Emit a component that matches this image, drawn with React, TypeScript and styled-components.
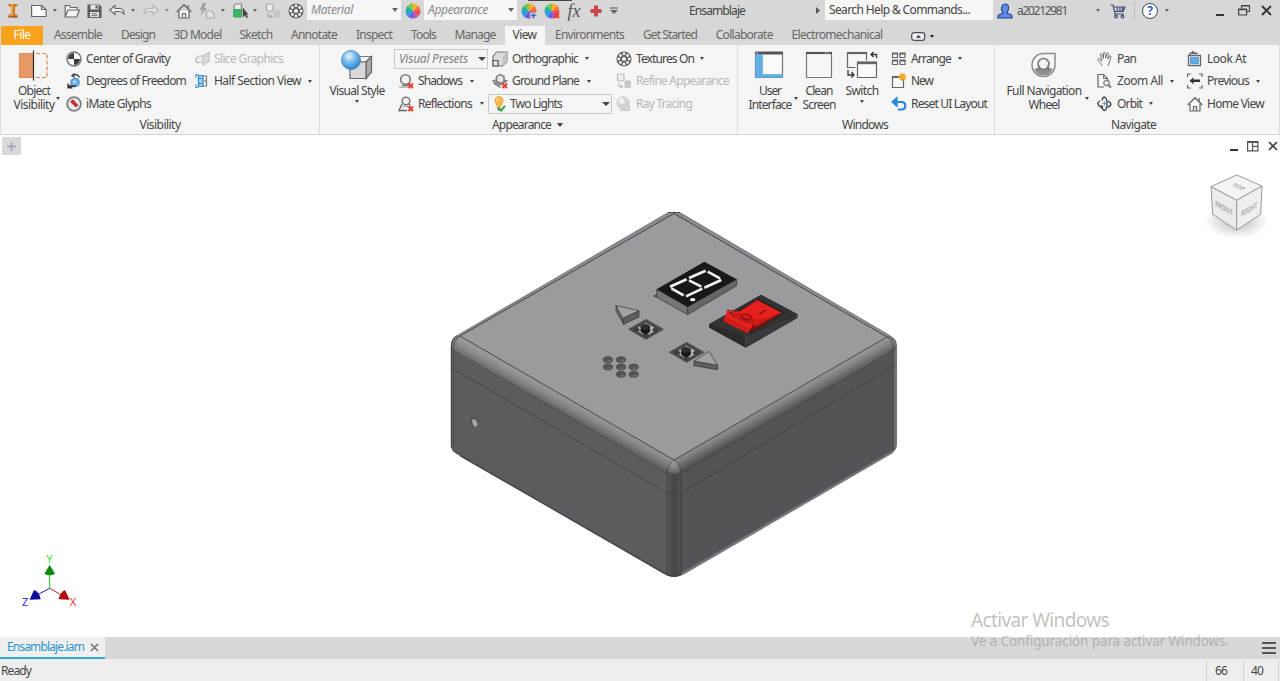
import React, { useLayoutEffect, useRef, useState } from "react";
import styled, { createGlobalStyle, css } from "styled-components";

const Global = createGlobalStyle`
  html, body { margin: 0; padding: 0; background: #fff; }
  body { font-family: "Noto Sans", "Open Sans", sans-serif; font-size: 12px; color: #444; overflow: hidden; }
  * { box-sizing: border-box; }
  svg { display: block; flex: none; overflow: visible; }
`;

/* ---------- text ---------- */

const TextSpan = styled.span<{ $italic?: boolean; $size?: number; $color?: string }>`
  display: inline-block;
  white-space: nowrap;
  line-height: 14px;
  flex: none;
  ${(p) => p.$italic && css`font-style: italic;`}
  ${(p) => p.$size && css`font-size: ${p.$size}px; line-height: ${p.$size * 1.3}px;`}
  ${(p) => p.$color && css`color: ${p.$color};`}
`;

type TextProps = { children: string; w: number; italic?: boolean; size?: number; color?: string };

/* Tracks the letters so that a caption takes exactly w pixels. */
function Text({ children, w, italic, size, color }: TextProps) {
  const ref = useRef<HTMLSpanElement>(null);
  const [spacing, setSpacing] = useState(0);
  useLayoutEffect(() => {
    const el = ref.current;
    if (!el) return;
    el.style.letterSpacing = "0px";
    const natural = el.getBoundingClientRect().width;
    const next = (w - natural) / children.length;
    el.style.letterSpacing = `${next}px`;
    setSpacing(next);
  }, [children, w]);
  return (
    <TextSpan ref={ref} $italic={italic} $size={size} $color={color} style={{ letterSpacing: spacing }}>
      {children}
    </TextSpan>
  );
}

const Caret = styled.i<{ $w?: number; $ml?: number; $color?: string }>`
  flex: none;
  width: 0;
  height: 0;
  margin-left: ${(p) => p.$ml ?? 0}px;
  border-left: ${(p) => (p.$w ?? 5) / 2}px solid transparent;
  border-right: ${(p) => (p.$w ?? 5) / 2}px solid transparent;
  border-top: ${(p) => ((p.$w ?? 5) + 1) / 2}px solid ${(p) => p.$color ?? "#444"};
`;

/* ---------- layout ---------- */

const Window = styled.div`
  width: 1280px;
  height: 681px;
  display: flex;
  flex-direction: column;
  background: #fff;
  position: relative;
`;

const TitleBar = styled.header`
  height: 26px;
  flex: none;
  background: #d7d7d7;
  display: flex;
  align-items: flex-start;
`;

const TopEdge = styled.div`
  position: absolute;
  left: 528px;
  top: 0;
  width: 44px;
  height: 1px;
  background: #4a4545;
`;

const Slot = styled.div<{ $ml?: number; $w: number }>`
  flex: none;
  height: 21px;
  width: ${(p) => p.$w}px;
  margin-left: ${(p) => p.$ml ?? 0}px;
  display: flex;
  align-items: center;
  justify-content: center;
`;

const TitleField = styled(Slot)`
  height: 20px;
  background: #f6f6f6;
  justify-content: flex-start;
  padding-left: 4px;
`;

const FieldCaret = styled.span`
  margin-left: auto;
  padding-right: 3px;
`;

const VRule = styled.div<{ $ml: number }>`
  width: 1px;
  height: 17px;
  margin: 2px 0 0 ${(p) => p.$ml}px;
  background: #bcbcbc;
`;

const TabStrip = styled.nav`
  height: 19px;
  flex: none;
  background: #d7d7d7;
  display: flex;
  padding-left: 1px;
  color: #666;
`;

const Tab = styled.div<{ $w: number; $kind?: "file" | "active" }>`
  flex: none;
  width: ${(p) => p.$w}px;
  height: 19px;
  padding-bottom: 1px;
  display: flex;
  justify-content: center;
  align-items: center;
  ${(p) => p.$kind === "file" && css`background: #fba21c; color: #fff; margin-right: 1.5px;`}
  ${(p) => p.$kind === "active" && css`background: #f5f5f5; color: #444;`}
`;

const Ribbon = styled.section`
  height: 90px;
  flex: none;
  background: #f5f5f5;
  border-bottom: 1px solid #d4d4d4;
  border-left: 1px solid #dcdcdc;
  display: flex;
`;

const Group = styled.div<{ $w: number }>`
  width: ${(p) => p.$w}px;
  flex: none;
  display: flex;
  flex-direction: column;
  border-right: 1px solid #dcdcdc;
`;

const GroupBody = styled.div`
  height: 71px;
  padding-top: 2.5px;
  display: flex;
`;

const GroupTitle = styled.div<{ $shift?: number }>`
  height: 17px;
  padding-right: ${(p) => p.$shift ?? 0}px;
  display: flex;
  align-items: center;
  justify-content: center;
`;

const Column = styled.div<{ $w: number; $pl?: number }>`
  width: ${(p) => p.$w}px;
  padding-left: ${(p) => p.$pl ?? 0}px;
  flex: none;
  display: flex;
  flex-direction: column;
`;

const Row = styled.div<{ $disabled?: boolean }>`
  height: 22.5px;
  display: flex;
  align-items: center;
  ${(p) => p.$disabled && css`color: #b8b8b8;`}
`;

const IconBox = styled.span<{ $gap?: number }>`
  width: 16px;
  height: 16px;
  flex: none;
  margin-right: ${(p) => p.$gap ?? 4}px;
`;

const Combo = styled.div<{ $w: number }>`
  width: ${(p) => p.$w}px;
  height: 20px;
  margin: 1px 0 1.5px -4px;
  padding: 0 1px 0 4px;
  border: 1px solid #c9c9c9;
  display: flex;
  align-items: center;
  justify-content: space-between;
`;

const ComboLead = styled.span`
  display: flex;
  align-items: center;
`;

const BigButton = styled.div<{ $w: number; $ml: number }>`
  width: ${(p) => p.$w}px;
  margin-left: ${(p) => p.$ml}px;
  flex: none;
  display: flex;
  flex-direction: column;
  align-items: center;
  padding-top: 2px;
`;

const BigIcon = styled.div`
  height: 34px;
  width: 32px;
`;

const BigCaret = styled.div`
  height: 68px;
  width: 6px;
  flex: none;
  padding-top: 49px;
`;

const UnderCaret = styled.div`
  padding-top: 2px;
`;

function Command(p: { icon: React.ReactNode; label: string; w: number; caret?: number; disabled?: boolean; gap?: number }) {
  return (
    <Row $disabled={p.disabled}>
      <IconBox $gap={p.gap}>{p.icon}</IconBox>
      <Text w={p.w}>{p.label}</Text>
      {p.caret !== undefined && <Caret $ml={p.caret} />}
    </Row>
  );
}

/* ---------- icons ---------- */

const S = ({ children, w = 16, h = 16, vb }: { children: React.ReactNode; w?: number; h?: number; vb?: string }) => (
  <svg width={w} height={h} viewBox={vb ?? `0 0 ${w} ${h}`} fill="none" stroke="#666" strokeWidth="1.2">
    {children}
  </svg>
);

const RedX = () => <path d="M10.500 10.500l4.500 4.500M15 10.500L10.500 15" stroke="#ee3a30" strokeWidth="2.100" />;

const InventorLogo = () => (
  <S w={10} h={15}>
    <path d="M.5 1h9v2l-2.400 1v7l2.400 1v2h-9v-2L3 11V4L.5 3z" fill="#cf7c22" stroke="none" />
    <path d="M3 1h2v13H3z" fill="#eaa04b" stroke="none" />
    <path d="M.5 14h9" stroke="#8c4b13" />
  </S>
);
const NewDoc = () => <S><path d="M.6 2.500h10l4.500 4V13.500H.6z" fill="#fafafa" /><path d="M10.500 2.500v4h4.500" /></S>;
const OpenFolder = () => <S><path d="M1.200 14V2.500h4l1.500 2h6.500v2.500M1.200 14L4 7h11.300l-2.500 7z" fill="#f4f4f4" /></S>;
const Save = () => (
  <S>
    <path d="M2 2h11.200l1.800 1.800V14.500H2z" fill="#5a5a5a" />
    <path d="M4.500 2h8v4.500h-8zM4 9h9v5h-9z" fill="#e6e6e6" stroke="none" />
    <path d="M5.500 10.800h6M5.500 12.600h6" strokeWidth=".9" /><path d="M9.500 2.500h2v3h-2z" fill="#555" stroke="none" />
  </S>
);
const Undo = () => (
  <S><path d="M.8 7L6 2.500v3h4.500c3 0 4.500 2 4.500 5.500C13.500 9.100 12 8.500 10 8.500H6v3z" strokeWidth="1.100" fill="#eee" /></S>
);
const Redo = () => (
  <S><path d="M15.200 7L10 2.500v3H5.500c-3 0-4.500 2-4.500 5.500C2.500 9.100 4 8.500 6 8.500h4v3z" stroke="#b4b4b4" strokeWidth="1.100" fill="#e2e2e2" /></S>
);
const Home = () => (
  <S>
    <path d="M3 8v7h10V8" fill="#f7f7f7" /><path d="M.8 9L8 1.800 15.200 9" strokeWidth="1.500" />
    <path d="M12.200 2v3.500" /><path d="M6.500 15v-4.500h3V15" />
  </S>
);
const Flash = () => (
  <S>
    <path d="M4 0L.5 7h3L1 13 8 5H5l2.500-5z" fill="#a0a0a0" stroke="none" />
    <path d="M7.500 8h5l2.500 2.500V15H7.500z" fill="#e2e2e2" stroke="#aaa" />
  </S>
);
const SelectTool = () => (
  <S>
    <path d="M1 6L1 2.500 3 1h5.500v5" fill="#ececec" stroke="#888" /><path d="M8.500 1v12" stroke="#888" /><path d="M.8 6.500h7.400V14H.8z" fill="#38b866" stroke="#40a562" />
    <path d="M10 5v9l2-2 1.500 3 1-.5-1.300-3H15z" fill="#444" stroke="#444" strokeWidth=".5" />
  </S>
);
const CopyBodies = ({ c = "#aaa" }: { c?: string }) => (
  <S>
    <path d="M1.500 2.500q0-1.500 1.500-1.500h3.500q1.500 0 1.500 1.500v4q0 1.500-1.500 1.500H3q-1.500 0-1.500-1.500z" fill="#eee" stroke={c} />
    <path d="M3 10v3.500h3.500M5 12l1.500 1.500L5 15" stroke={c} />
    <path d="M9 8h5.500v6.500H9z" fill="#c8c8c8" stroke="#c0c0c0" strokeWidth=".8" />
  </S>
);
const TextureBall = () => (
  <S>
    <circle cx="8" cy="8" r="7" fill="#606060" />
    <g fill="#f4f4f4" stroke="none">
      <rect x="6.200" y="6.200" width="3.600" height="3.600" transform="rotate(45 8 8)" />
      <circle cx="8" cy="2.800" r="1.400" /><circle cx="8" cy="13.200" r="1.400" /><circle cx="2.800" cy="8" r="1.400" /><circle cx="13.200" cy="8" r="1.400" />
      <circle cx="4.500" cy="4.500" r="1.400" /><circle cx="11.500" cy="4.500" r="1.400" /><circle cx="4.500" cy="11.500" r="1.400" /><circle cx="11.500" cy="11.500" r="1.400" />
    </g>
  </S>
);
const wheelColors = ["#ffb02e", "#f4743b", "#ee4a55", "#b155c9", "#5869e0", "#2e9be8", "#25b88a", "#7cc64a"];
const ColorWheel = ({ badge }: { badge?: "plus" | "x" }) => {
  const pt = (a: number) => `${8 + 7.5 * Math.sin(a)} ${8 - 7.5 * Math.cos(a)}`;
  return (
    <S>
      {wheelColors.map((c, i) => (
        <path key={c} stroke="none" fill={c} d={`M8 8L${pt((i * Math.PI) / 4)}A7.500 7.500 0 0 1 ${pt(((i + 1) * Math.PI) / 4)}z`} />
      ))}
      {badge === "plus" && <path d="M12.500 9v7M9 12.500h7" stroke="#e8f1fa" strokeWidth="3.600" />}
      {badge === "plus" && <path d="M12.500 9.500v6M9.500 12.500h6" stroke="#2f6da8" strokeWidth="1.600" />}
      {badge === "x" && <RedX />}
    </S>
  );
};
const Fx = styled.span`
  font: italic 18px/18px "Liberation Serif", serif;
  color: #555;
  letter-spacing: 0;
`;
const Plus = () => <S w={12} h={12}><path d="M6 .5v11M.5 6h11" stroke="#c9494a" strokeWidth="4" /></S>;
const Person = () => (
  <S>
    <path d="M8 1c2.400 0 3.600 1.700 3.600 4S10 9 10 10c0 .8 5 1 5 3v2H1v-2c0-2 5-2.200 5-3 0-1-1.600-1.700-1.600-4S5.600 1 8 1z" fill="#5d8bea" stroke="#26407c" strokeWidth="1.100" />
  </S>
);
const Cart = () => (
  <S>
    <path d="M.5 2H3l2 9h9M3.500 4h11.500l-2 4.500H4.800M7 4.500l.8 4M10 4.500v4M13 4.500l-1 4" stroke="#3d4c73" strokeWidth="1.200" />
    <circle cx="6" cy="13.500" r="1.300" stroke="#3d4c73" /><circle cx="12.500" cy="13.500" r="1.300" stroke="#3d4c73" />
  </S>
);
const HelpCircle = styled.span`
  width: 16px;
  height: 16px;
  flex: none;
  border: 1.5px solid #3b4658;
  border-radius: 50%;
  background: #fff;
  color: #2d62c4;
  font: bold 12px/14px "Noto Sans", sans-serif;
  text-align: center;
`;
const MinIcon = () => <S w={8} h={12}><path d="M0 10h8" stroke="#333" strokeWidth="2" /></S>;
const RestoreIcon = () => <S w={12} h={11}><path d="M3.500 3.500v-3h8v6H9M3 1h8.500" stroke="#444" /><path d="M.6 4h8v6h-8zM.6 4.600h8" stroke="#444" /></S>;
const CloseIcon = ({ s = 11, c = "#333", t = 1.8 }: { s?: number; c?: string; t?: number }) => (
  <S w={s} h={s}><path d={`M1 1L${s - 1} ${s - 1}M${s - 1} 1L1 ${s - 1}`} stroke={c} strokeWidth={t} /></S>
);

const ObjectVisibility = () => (
  <S w={32} h={34}>
    <path d="M1.500 3.500h13v24h-13z" fill="#e59a66" stroke="#df8f5b" />
    <path d="M18 3.500h11v24H18" stroke="#dc8250" strokeDasharray="4 2" />
    <path d="M15.500 0.500v30" stroke="#333" />
  </S>
);
const Gravity = () => (
  <S>
    <circle cx="8" cy="8" r="7" fill="#fafafa" stroke="#777" strokeWidth="1.500" />
    <path d="M8 8V2A6 6 0 0 0 2 8zM8 8v6a6 6 0 0 0 6-6z" fill="#3c3c3c" stroke="none" />
  </S>
);
const Freedom = () => (
  <S>
    <circle cx="9" cy="9.500" r="4.200" fill="#6fb0e4" stroke="#5292c8" /><circle cx="8.500" cy="9" r="1.400" fill="#b7dbf7" stroke="none" />
    <path d="M6.500 2.500C9 .8 12 1.500 13.500 4.500M8.500 .5L6 2.800l3 1.200" stroke="#333" strokeWidth="1.300" /><path d="M3 12.500c2 1.500 5 1.500 6.500 0M2 11.500v3.500h3.500z" stroke="#333" fill="#333" strokeWidth="1.200" />
  </S>
);
const IMate = () => (
  <S>
    <circle cx="8" cy="8" r="6.900" fill="#e8e8e8" stroke="#858585" strokeWidth="1.900" />
    <path d="M5.500 4.500l5.500 6" stroke="#c43038" strokeWidth="4" /><path d="M4.200 7l6 5" stroke="#fff" strokeWidth=".7" />
  </S>
);
const Slice = () => (
  <S><path d="M1 11.500V7.500l3-2.500h4v6M1 11.500h6M8 5l6-3.500V10l-6 4z" fill="#ececec" stroke="#bbb" /><path d="M10 6l2-1.500v5L10 11z" fill="#f4f4f4" stroke="#bbb" strokeWidth=".8" /></S>
);
const HalfSection = () => (
  <S>
    <path d="M1 4.500V1.500h2M1 11.500v3h2" stroke="#2f8ddb" /><path d="M3.500 2.500h4.500v11H3.500z" fill="#a5d3f7" stroke="#2f8ddb" /><path d="M3.500 5.500H8M3.500 10.500H8" stroke="#2f8ddb" />
    <path d="M8.500 3h3v10h-3M8.500 8h3" stroke="#777" />
  </S>
);
const VisualStyleIcon = () => (
  <S w={32} h={34}>
    <defs>
      <radialGradient id="ball" cx=".4" cy=".3" r=".7"><stop offset="0" stopColor="#eaf6ff" /><stop offset=".45" stopColor="#7dbcec" /><stop offset="1" stopColor="#2d86cb" /></radialGradient>
    </defs>
    <path d="M9 12l5-5.500h16.500L25 12z" fill="#f6f6f6" stroke="#777" /><path d="M25 12l5.500-5.500V22L25 28.500z" fill="#a9a9a9" stroke="#666" />
    <path d="M9 12h16v16.500H9z" fill="#d9d9d9" stroke="#666" />
    <circle cx="10" cy="10" r="9.500" fill="url(#ball)" stroke="#3a86c2" strokeWidth=".8" />
  </S>
);
const Shadows = () => <S><circle cx="7.500" cy="6.500" r="4.800" fill="#f2f2f2" stroke="#777" strokeWidth="1.600" /><path d="M4 12.500h7" stroke="#777" strokeWidth="1.300" /><path d="M1 14.200h9" stroke="#aaa" strokeWidth="1.300" /><RedX /></S>;
const Reflections = () => <S><path d="M4 8L1 14.500h8M11 8l1.500 2.500" stroke="#666" strokeWidth="1.400" /><circle cx="8" cy="5" r="3.800" fill="#f2f2f2" stroke="#777" strokeWidth="1.500" /><path d="M5 11.500c1-2 4-2 5.500 0" stroke="#888" /><RedX /></S>;
const Ortho = () => (
  <S><path d="M1 5.500L4.500 1H15v9.500L10.500 15H1z" fill="#dcdcdc" stroke="#777" /><path d="M10.500 5.500L15 1v9.500L10.500 15z" fill="#c4c4c4" stroke="none" /><path d="M1 9.500h5V15H1z" fill="#e8e8e8" stroke="#555" /></S>
);
const Ground = () => (
  <S><path d="M1 8l6-2.500 8 2.500-7 4z" fill="#ddd" stroke="#777" /><path d="M4.500 3.500l3.500-2 4 2v5l-3.500 2-4-2z" fill="#e6e6e6" stroke="#777" strokeWidth="1.400" /><path d="M1.500 10l7 4.500" /><RedX /></S>
);
const Bulb = () => (
  <S>
    <path d="M6 .5a4.200 4.200 0 0 1 4.200 4.200C10.200 7 8.500 7.500 8 10.500H4C3.500 7.500 1.800 7 1.800 4.700A4.200 4.200 0 0 1 6 .5z" fill="#fbb649" stroke="#e59a2e" strokeWidth=".6" />
    <path d="M4.500 2.500c-1 1-.8 2 0 3" stroke="#fff1cc" /><path d="M4 12h3M4.500 14h2" stroke="#777" strokeWidth="1.500" />
    <path d="M5.500 12l2.500 2.500 4-4.500" stroke="#2fa343" strokeWidth="1.900" />
  </S>
);
const RayBall = () => <S><path d="M4 14h9v-4" stroke="#ccc" strokeWidth="2" /><circle cx="7" cy="7" r="6.200" fill="#d2d2d2" stroke="#cacaca" strokeWidth=".8" /><circle cx="5.500" cy="5" r="3" fill="#f0f0f0" stroke="none" /></S>;
const UserInterface = () => (
  <S w={32} h={34}>
    <path d="M1.500 2.500h27v25h-27z" fill="#fafafa" stroke="#777" /><path d="M1 3h28" stroke="#555" strokeWidth="3" />
    <path d="M1.500 4.500h7v20h20v3h-27z" fill="#62ade3" stroke="#5aa3d8" strokeWidth=".6" /><path d="M2.500 3h1.500" stroke="#fff" />
  </S>
);
const CleanScreen = () => <S w={32} h={34}><path d="M3.500 2.500h25v25h-25z" fill="#f6f6f6" stroke="#777" /><path d="M3 3h26" stroke="#555" strokeWidth="2.200" /><path d="M22 3h1M24.500 3h1" stroke="#fff" /></S>;
const SwitchIcon = () => (
  <S w={32} h={34}>
    <path d="M9.500 17.500h-8v-15h19v8" fill="#f6f6f6" /><path d="M1 3h20" strokeWidth="2.200" />
    <path d="M11.500 12h19v15.500h-19z" fill="#fafafa" /><path d="M11 13h20" strokeWidth="2.400" />
    <path d="M30.500 8V4.500H25M27.500 2L25 4.500 27.500 7M2 20v5h6M5.500 22L8 25l-2.500 2.500" stroke="#333" strokeWidth="1.300" />
  </S>
);
const Arrange = () => <S><path d="M1.500 2.500h5v4h-5zM9 2.500h5v4H9zM1.500 9.500h5v4h-5zM9 9.500h5v4H9z" fill="#fafafa" /><path d="M1 2.500h6M8.500 2.500h6M1 9.500h6M8.500 9.500h6" strokeWidth="1.900" /></S>;
const NewWindow = () => <S><path d="M1.500 3.500h11v11h-11z" fill="#f8f8f8" /><path d="M1 4h12" strokeWidth="2" /><path d="M11.500 0v8M7.500 4h8M8.800 1.200l5.500 5.500M14.300 1.200L8.800 6.700" stroke="#f9a826" strokeWidth="1.700" /></S>;
const ResetIcon = () => <S><path d="M4 6h6.500c5 0 5 7.500 0 7.500H7" stroke="#2a86d8" strokeWidth="2.200" /><path d="M6 1.500L1 6l5 4.500z" fill="#2a86d8" stroke="#2a86d8" /></S>;
const NavWheel = () => (
  <S w={32} h={34}>
    <path d="M15.500 3.500H27V15A11.500 11.500 0 1 1 15.500 3.500z" fill="#f6f6f6" stroke="#8c8c8c" strokeWidth="1.500" />
    <path d="M7 19.500A9.500 9.500 0 0 0 24 19.500L20 17.500H11z" fill="#8e8e8e" stroke="#8e8e8e" />
    <circle cx="15.500" cy="14" r="5.500" fill="#f3f3f3" stroke="#777" strokeWidth="1.500" />
    <path d="M10.500 20.500v-2q0-2.500 1.500-3.500M20.500 20.500v-2q0-2.500-1.500-3.500" stroke="#777" strokeWidth=".8" />
  </S>
);
const PanHand = () => (
  <S><path d="M5 15l-1-2.500L.8 8.500c-.3-1 .8-1.400 1.500-.7L5 10 3.300 3.500c0-1 1.200-1.200 1.600-.2L6.500 7.500 6.500 2c.2-1 1.500-1 1.600 0l.6 5.200L10 2.200c.4-1 1.600-.6 1.500.3L10.800 8l1.700-3c.6-.8 1.700-.2 1.400.7L12.500 11 11 15" fill="#f8f8f8" stroke="#777" strokeWidth="1" /></S>
);
const ZoomAllIcon = () => <S><path d="M7 14H1V1.500h5.500l4 4V7" fill="#f6f6f6" /><path d="M6.500 1.500v4h4" strokeWidth=".9" /><circle cx="9.500" cy="10" r="2.700" stroke="#777" /><path d="M11.500 12l2.500 2.500" strokeWidth="1.900" stroke="#777" /></S>;
const OrbitIcon = () => (
  <S>
    <path d="M5 4.500C5.500 2 6.300 1 7.300 1c3.700 0 3.500 13.500 0 13.500-1.200 0-2-1.500-2.300-3.500" stroke="#444" strokeWidth="1.300" />
    <path d="M3 5C-1 7 1 10.500 5 11M10.500 5c4.500 1.500 4.500 5 0 6" stroke="#444" strokeWidth="1.300" />
    <path d="M4.500 8.500L6.500 11l-3 2z" fill="#444" stroke="none" /><path d="M7.500 5.500v4M5.500 7.500h4" stroke="#4a9ade" strokeWidth="1.200" />
  </S>
);
const LookAt = () => <S><path d="M1.500 4.500h12v10h-12z" fill="#f8f8f8" stroke="#666" strokeWidth="1.300" /><path d="M3.500 6.500h8v6h-8z" fill="#63ade5" stroke="#3e8fce" strokeWidth=".8" /><path d="M2 3.500L6 .8v1.500h4.500" stroke="#555" strokeWidth="1.500" /></S>;
const PreviousIcon = () => <S><path d="M4 1H.6v3M12 1h3v3M4 15H.6v-3M12 15h3v-3" /><path d="M2.500 7.700l4-3.500V6.500H13v2.400H6.500v2.300z" fill="#333" stroke="none" /></S>;
const RibbonToggle = () => <S w={15} h={9}><rect x=".7" y=".7" width="13" height="7.600" rx="2.500" fill="#f1f1f1" stroke="#444f5f" /><path d="M5 5.700h5L7.500 3z" fill="#333" stroke="none" /></S>;
const MdiTile = () => <S w={12} h={11}><path d="M.6 .6h10.300v9.300H.6zM.6 1.500h10.300M5.500 1.500v8M5.500 5.300H11" stroke="#555" /></S>;

/* ---------- canvas ---------- */

const Canvas = styled.main`
  position: relative;
  height: 502px;
  flex: none;
  background: #fff;
`;
const CanvasHead = styled.div`
  display: flex;
  align-items: flex-start;
  height: 22px;
  padding: 2px 0 0 2px;
`;
const AddTab = styled.div`
  width: 19px;
  height: 18px;
  background: #d9d9d9;
  display: grid;
  place-items: center;
`;
const WindowTools = styled.div`
  margin: 4px 2px 0 auto;
  display: flex;
  align-items: center;
  gap: 9px;
  height: 10px;
`;
const Placed = styled.div<{ $x: number; $y: number }>`
  position: absolute;
  left: ${(p) => p.$x}px;
  top: ${(p) => p.$y}px;
`;

const PushButton = ({ x, y }: { x: number; y: number }) => (
  <g transform={`translate(${x} ${y})`}>
    <path d="M0-31L54 0 0 31-54 0z" fill="#4a4a4c" />
    <path d="M0-19L34 0 0 21-34 0z" fill="#b4b3b7" />
    <path d="M-38 0l12-7 8 9-8 7zM38 0L26-7l-8 9 8 7zM0 26l-10-8 10-9 10 9z" fill="#3c3c3d" />
    <ellipse cx="-2" cy="2" rx="15" ry="12" fill="#171717" />
    <ellipse cx="-2" cy="-7" rx="15" ry="9" fill="#2b2b2c" />
  </g>
);

const Model = () => (
  <svg width="452" height="372" viewBox="448 208 452 372">
    <defs>
      <linearGradient id="fl" gradientUnits="userSpaceOnUse" x1="567" y1="398" x2="559.500" y2="411.500">
        <stop offset="0" stopColor="#99989c" /><stop offset=".35" stopColor="#8d8c90" /><stop offset=".75" stopColor="#737477" /><stop offset="1" stopColor="#5e5f62" />
      </linearGradient>
      <linearGradient id="fr" gradientUnits="userSpaceOnUse" x1="781" y1="398" x2="788.500" y2="411.500">
        <stop offset="0" stopColor="#959498" /><stop offset=".35" stopColor="#828285" /><stop offset=".75" stopColor="#626366" /><stop offset="1" stopColor="#515256" />
      </linearGradient>
      <linearGradient id="ve" x1="0" x2="1"><stop offset="0" stopColor="#57585b" /><stop offset=".5" stopColor="#454548" /><stop offset="1" stopColor="#515256" /></linearGradient>
      <radialGradient id="dome" cx=".45" cy=".15" r=".9"><stop offset="0" stopColor="#a0a0a3" /><stop offset=".6" stopColor="#77787b" /><stop offset="1" stopColor="#505154" /></radialGradient>
    </defs>
    <path d="M668 212.500h12L890 335.500q7 3.500 7 10V444q0 6-5 9L681 575.500q-7 3-14 0L457 454q-6-3-6-8V345q0-6 6-9.500z" fill="#727176" />
    <path d="M668 212.500h12L890 335.500l-3 1.500L674 214 460 336l-3-.5z" fill="#8c8b90" />
    <path d="M451.500 346v101" stroke="#505155" strokeWidth="1.500" />
    <path d="M674 214L887 337 674 460 460 336z" fill="#9b9a9e" />
    <path d="M454 350L667 473V574.500L456 452.500q-3-2-3-5V352z" fill="#5b5c5f" />
    <path d="M681 473L893.500 350V450L681 573z" fill="#535458" />
    <path d="M460 336L674 460 667 474 453 351q-1-10 7-15z" fill="url(#fl)" />
    <path d="M887 337L674 460 681 474 896 349q0-8-9-12z" fill="url(#fr)" />
    <path d="M667 470h14v105q-7 3-14 0z" fill="url(#ve)" />
    <path d="M674 460q-7 5-7 13.500 7 2.500 14 0 0-8.500-7-13.500z" fill="url(#dome)" />
    <g fill="none" stroke="#38383a" strokeWidth=".8">
      <path d="M668 212.500h12M460 336L674 460 887 337 674 213.500 460 336" />
      <path d="M668 212.500L457 335.500M680 212.500L890 335.500" opacity=".3" />
      <path d="M454 350.500L667 473.500q7 2 14 0L896 349" opacity=".6" />
      <path d="M451 367.500L667 493q7 2 14 0L896.500 364.500" opacity=".8" />
      <path d="M667 473.500V575M681 473.500V575M674 460q-7 5-7 13.500M674 460q7 5 7 13.500M453.500 350v98M893.500 351v99M460 336q-7 5-6.500 15M887 337q7 4 6.500 14" opacity=".7" />
      <path d="M457 335.500q-5.500 3-5.500 9.500V447q2 4 5 6L667 575q7 3 14 0" />
    </g>
    <path d="M460 455.500L666 574" stroke="#4a4b4e" strokeWidth="1.500" />
    <path d="M682 574.500L893 452" stroke="#77767e" strokeWidth="1.800" />
    <ellipse cx="474" cy="422" rx="3.700" ry="5.300" fill="#505154" transform="rotate(-20 474 422)" /><ellipse cx="474.800" cy="422.800" rx="2.300" ry="4" fill="#a3a4a6" transform="rotate(-20 475 423)" />
    <g transform="translate(590 250) scale(.33333)">
      <g fill="#545458">
        {[[54, 329], [93, 329], [54, 351], [93, 351], [131, 351], [93, 373], [131, 373]].map(([x, y]) => (
          <g key={`${x}-${y}`}>
            <ellipse cx={x} cy={y} rx="14" ry="9" stroke="#3f3f42" strokeWidth="2" />
            <path d={`M${x - 6} ${y + 7}q6-8 18-6-3 7-18 6z`} fill="#6c6b70" />
          </g>
        ))}
      </g>
      <g stroke="#333" strokeWidth="2" strokeLinejoin="round">
        <path d="M78 167L98 205 101 223 78 183z" fill="#6c6c70" /><path d="M98 205L147 182V201L101 223z" fill="#5e5e62" /><path d="M78 167L147 182 98 205z" fill="#a2a1a5" />
      </g>
      <PushButton x={168} y={238} />
      <PushButton x={290} y={307} />
      <g stroke="#333" strokeWidth="2" strokeLinejoin="round">
        <path d="M312 333L383 346V359L311 347z" fill="#5e5e62" /><path d="M357 304L383 346 312 333z" fill="#a2a1a5" />
      </g>
      <path d="M190 138l10-6v12z" fill="#444" />
      <path d="M200 118L293 170V194L200 142z" fill="#77767b" stroke="#333" strokeWidth="2" />
      <path d="M293 170L440 88V107L293 194z" fill="#66666a" stroke="#333" strokeWidth="2" />
      <path d="M343 35L440 88 293 171 200 118z" fill="#181818" />
      <path d="M240 110L290 88M297 84L347 62M353 65L390 85M394 90L343 113M337 116L288 139M297 91L334 110M244 115L281 136" stroke="#f1f1f1" strokeWidth="8" />
      <ellipse cx="308" cy="149" rx="8" ry="5" fill="#fff" />
      <path d="M513 134L622 192V204L467 293 358 233V222z" fill="#202021" />
      <path d="M358 222L467 262V291L358 232z" fill="#2b2b2c" />
      <path d="M467 260L622 193V203L467 291z" fill="#3a3a3b" />
      <path d="M513 136L620 192 467 262 360 222z" fill="#333334" />
      <path d="M467 256V291" stroke="#555" strokeWidth="2" />
      <path d="M506 146L584 188 483 250 392 213z" fill="#242020" />
      <path d="M577 188L500 238 480 244 487 219z" fill="#7d1210" />
      <path d="M502 150L575 188 497 228 412 181 450 184z" fill="#e6201c" />
      <path d="M412 180Q426 204 490 222L474 250 400 214z" fill="#e5221e" />
      <path d="M400 214l5-14 76 36-7 14z" fill="#cf1c19" />
      <path d="M412 180Q430 208 495 222L577 188M412 180Q436 186 450 184L502 150" stroke="#9c1512" strokeWidth="2.500" fill="none" />
      <path d="M440 187Q470 205 505 207L530 207 490 219Q440 210 424 192z" fill="#c81a17" />
      <ellipse cx="469" cy="201" rx="15" ry="8" fill="none" stroke="#7a100e" strokeWidth="3" transform="rotate(15 469 201)" />
      <path d="M507 193L528 180" stroke="#7a100e" strokeWidth="4" />
    </g>
  </svg>
);

const ViewCube = () => (
  <svg width="80" height="80" viewBox="0 0 240 240">
    <defs><radialGradient id="shade"><stop offset="0" stopColor="#777" stopOpacity=".55" /><stop offset=".6" stopColor="#777" stopOpacity=".2" /><stop offset="1" stopColor="#777" stopOpacity="0" /></radialGradient></defs>
    <ellipse cx="110" cy="155" rx="96" ry="50" fill="url(#shade)" />
    <g stroke="#9a9a9a" strokeWidth="3" strokeLinejoin="round">
      <path d="M110 15L186 48 110 91 33 50z" fill="#f4f4f4" /><path d="M33 50L110 91V180L38 133z" fill="#ebebeb" /><path d="M186 48L182 133 110 180V91z" fill="#efefef" />
    </g>
    <g fill="#a3a3a3" fontSize="23" fontWeight="600" fontFamily="Noto Sans, sans-serif">
      <text transform="matrix(.7 .32 -.65 .5 94 47)" textLength="48" lengthAdjust="spacingAndGlyphs">TOP</text>
      <text transform="matrix(.72 .4 0 1 46 108)" textLength="72" lengthAdjust="spacingAndGlyphs">FRONT</text>
      <text transform="matrix(.72 -.42 0 1 124 140)" textLength="66" lengthAdjust="spacingAndGlyphs">RIGHT</text>
    </g>
  </svg>
);

const Axes = () => (
  <svg width="64" height="60" viewBox="50 30 192 180" fontFamily="Noto Sans, sans-serif" fontSize="33">
    <path d="M148 145V100" stroke="#1ec81e" strokeWidth="3" /><path d="M148 145L185 166" stroke="#a83030" strokeWidth="3" /><path d="M148 145L112 164" stroke="#2020a8" strokeWidth="3" />
    <path d="M148 75L132 101Q148 110 164 101z" fill="#098a0e" />
    <path d="M208 179L175 178Q178 158 194 150z" fill="#b30f0f" />
    <path d="M88 179L101 150Q117 156 121 178z" fill="#0b0b9c" />
    <text x="138" y="70" fill="#3be03b">Y</text><text x="208" y="198" fill="#f03434">X</text><text x="65" y="198" fill="#3434e0">Z</text>
  </svg>
);

/* ---------- bottom ---------- */

const DocTabs = styled.div`
  height: 22px;
  flex: none;
  background: #d8d8d8;
  display: flex;
  justify-content: space-between;
`;
const DocTab = styled.div`
  width: 105px;
  height: 22px;
  background: #efefef;
  border-bottom: 2px solid #37a5dc;
  color: #2c93cd;
  display: flex;
  align-items: center;
  padding-left: 7px;
  gap: 6px;
`;
const Menu = styled.div`
  width: 14px;
  height: 12px;
  margin: 5px 4px 0 0;
  border-top: 2px solid #555;
  border-bottom: 2px solid #555;
  display: flex;
  align-items: center;
  &::after { content: ""; height: 2px; flex: 1; background: #555; }
`;
const StatusBar = styled.footer`
  height: 22px;
  flex: none;
  background: #eee;
  display: flex;
  align-items: center;
  padding: 2px 1px 0 1px;
`;
const StatusCell = styled.div<{ $first?: boolean; $w: number }>`
  margin-left: ${(p) => (p.$first ? "auto" : 0)};
  width: ${(p) => p.$w}px;
  height: 20px;
  border-left: 1px solid #cfd2d6;
  padding: 0 0 1px 8px;
  display: flex;
  align-items: center;
`;
const EndCell = styled(StatusCell)`
  padding-left: 7px;
  border-right: 1px solid #cfd2d6;
`;
const Watermark = styled.div`
  position: absolute;
  left: 971px;
  top: 609px;
  display: flex;
  flex-direction: column;
  color: rgba(140, 140, 140, 0.55);
`;
const WatermarkLine = styled.div`
  height: 22px;
  display: flex;
  align-items: center;
`;

const tabs: [string, number, number, ("file" | "active")?][] = [
  ["File", 17, 42, "file"], ["Assemble", 48, 67], ["Design", 34, 53], ["3D Model", 48, 66], ["Sketch", 33, 51], ["Annotate", 46, 65],
  ["Inspect", 36, 55], ["Tools", 25, 44], ["Manage", 41, 59], ["View", 24, 40, "active"], ["Environments", 69, 90],
  ["Get Started", 54, 71], ["Collaborate", 57, 77.5], ["Electromechanical", 91, 108],
];

export default function App() {
  return (
    <Window>
      <Global />
      <TitleBar>
        <Slot $ml={8} $w={10}><InventorLogo /></Slot>
        <Slot $ml={12} $w={17}><NewDoc /></Slot>
        <Slot $ml={5} $w={6}><Caret $color="#666" /></Slot>
        <Slot $ml={6} $w={16}><OpenFolder /></Slot>
        <Slot $ml={6} $w={16}><Save /></Slot>
        <Slot $ml={7} $w={16}><Undo /></Slot>
        <Slot $ml={5} $w={6}><Caret $color="#666" /></Slot>
        <Slot $ml={7} $w={16}><Redo /></Slot>
        <Slot $ml={5} $w={6}><Caret $color="#888" /></Slot>
        <Slot $ml={6} $w={16}><Home /></Slot>
        <Slot $ml={7} $w={16}><Flash /></Slot>
        <Slot $ml={5} $w={6}><Caret $color="#666" /></Slot>
        <Slot $ml={7} $w={16}><SelectTool /></Slot>
        <Slot $ml={3} $w={6}><Caret $color="#666" /></Slot>
        <Slot $ml={7} $w={16}><CopyBodies /></Slot>
        <Slot $ml={7} $w={16}><TextureBall /></Slot>
        <TitleField $ml={3} $w={94}><Text w={42} italic color="#8b8b8b">Material</Text><FieldCaret><Caret as="div" $w={7} $color="#666" /></FieldCaret></TitleField>
        <Slot $ml={4} $w={16}><ColorWheel /></Slot>
        <TitleField $ml={3} $w={93}><Text w={60} italic color="#8b8b8b">Appearance</Text><FieldCaret><Caret as="div" $w={7} $color="#666" /></FieldCaret></TitleField>
        <Slot $ml={4} $w={16}><ColorWheel badge="plus" /></Slot>
        <Slot $ml={7} $w={16}><ColorWheel badge="x" /></Slot>
        <Slot $ml={6} $w={16}><Fx>fx</Fx></Slot>
        <Slot $ml={8} $w={12}><Plus /></Slot>
        <Slot $ml={8} $w={8}><S w={8} h={7}><path d="M0 1h8" stroke="#666" /><path d="M0 3h8L4 7z" fill="#666" stroke="none" /></S></Slot>
        <Slot $ml={71} $w={56}><Text w={56}>Ensamblaje</Text></Slot>
        <Slot $ml={71} $w={4}><S w={4} h={7}><path d="M0 0l4 3.500L0 7z" fill="#555" stroke="none" /></S></Slot>
        <TitleField $ml={5} $w={168}><Text w={141}>Search Help &amp; Commands...</Text></TitleField>
        <Slot $ml={4} $w={16}><Person /></Slot>
        <Slot $ml={4} $w={50}><Text w={50} color="#555">a20212981</Text></Slot>
        <Slot $ml={28} $w={5}><Caret $color="#666" /></Slot>
        <Slot $ml={10} $w={16}><Cart /></Slot>
        <VRule $ml={8} />
        <Slot $ml={7} $w={16}><HelpCircle>?</HelpCircle></Slot>
        <Slot $ml={6} $w={5}><Caret $color="#666" /></Slot>
        <Slot $ml={47} $w={8}><MinIcon /></Slot>
        <Slot $ml={14} $w={12}><RestoreIcon /></Slot>
        <Slot $ml={11} $w={11}><CloseIcon /></Slot>
      </TitleBar>
      <TopEdge />

      <TabStrip>
        {tabs.map(([label, w, cell, kind]) => (
          <Tab key={label} $w={cell} $kind={kind}><Text w={w}>{label}</Text></Tab>
        ))}
        <Slot $ml={20} $w={15}><RibbonToggle /></Slot>
        <Slot $ml={3} $w={5}><Caret $color="#222" /></Slot>
      </TabStrip>

      <Ribbon>
        <Group $w={319}>
          <GroupBody>
            <BigButton $w={44} $ml={11}>
              <BigIcon><ObjectVisibility /></BigIcon>
              <Text w={32}>Object</Text><Text w={41}>Visibility</Text>
            </BigButton>
            <BigCaret><Caret as="div" /></BigCaret>
            <Column $w={129} $pl={4}>
              <Command icon={<Gravity />} label="Center of Gravity" w={84} />
              <Command icon={<Freedom />} label="Degrees of Freedom" w={100} />
              <Command icon={<IMate />} label="iMate Glyphs" w={65} />
            </Column>
            <Column $w={124} $pl={4}>
              <Command icon={<Slice />} label="Slice Graphics" w={69} gap={3} disabled />
              <Command icon={<HalfSection />} label="Half Section View" w={87} caret={7} gap={3} />
            </Column>
          </GroupBody>
          <GroupTitle><Text w={41}>Visibility</Text></GroupTitle>
        </Group>

        <Group $w={418}>
          <GroupBody>
            <BigButton $w={56} $ml={9}>
              <BigIcon><VisualStyleIcon /></BigIcon>
              <Text w={55}>Visual Style</Text>
              <UnderCaret><Caret as="div" /></UnderCaret>
            </BigButton>
            <Column $w={94} $pl={13}>
              <Combo $w={94}><Text w={69} italic color="#808080">Visual Presets</Text><Caret $w={8} /></Combo>
              <Command icon={<Shadows />} label="Shadows" w={44} caret={8} />
              <Command icon={<Reflections />} label="Reflections" w={54} caret={8} />
            </Column>
            <Column $w={137} $pl={13}>
              <Command icon={<Ortho />} label="Orthographic" w={66} caret={7} />
              <Command icon={<Ground />} label="Ground Plane" w={67} caret={8} />
              <Combo $w={124}><ComboLead><IconBox $gap={1}><Bulb /></IconBox><Text w={52}>Two Lights</Text></ComboLead><Caret $w={8} /></Combo>
            </Column>
            <Column $w={121}>
              <Command icon={<TextureBall />} label="Textures On" w={58} caret={6} />
              <Command icon={<CopyBodies c="#bbb" />} label="Refine Appearance" w={93} disabled />
              <Command icon={<RayBall />} label="Ray Tracing" w={56} disabled />
            </Column>
          </GroupBody>
          <GroupTitle $shift={2}><Text w={59}>Appearance</Text><Caret $w={7} $ml={6} /></GroupTitle>
        </Group>

        <Group $w={257}>
          <GroupBody>
            <BigButton $w={44} $ml={10}>
              <BigIcon><UserInterface /></BigIcon>
              <Text w={22}>User</Text><Text w={43}>Interface</Text>
            </BigButton>
            <BigCaret><Caret as="div" $ml={2} /></BigCaret>
            <BigButton $w={34} $ml={4}>
              <BigIcon><CleanScreen /></BigIcon>
              <Text w={27}>Clean</Text><Text w={33}>Screen</Text>
            </BigButton>
            <BigButton $w={34} $ml={9}>
              <BigIcon><SwitchIcon /></BigIcon>
              <Text w={33}>Switch</Text>
              <UnderCaret><Caret as="div" /></UnderCaret>
            </BigButton>
            <Column $w={102} $pl={12}>
              <Command icon={<Arrange />} label="Arrange" w={40} caret={7} />
              <Command icon={<NewWindow />} label="New" w={22} />
              <Command icon={<ResetIcon />} label="Reset UI Layout" w={76} />
            </Column>
          </GroupBody>
          <GroupTitle $shift={2}><Text w={46}>Windows</Text></GroupTitle>
        </Group>

        <Group $w={285}>
          <GroupBody>
            <BigButton $w={76} $ml={11}>
              <BigIcon><NavWheel /></BigIcon>
              <Text w={75}>Full Navigation</Text><Text w={31}>Wheel</Text>
            </BigButton>
            <BigCaret><Caret as="div" $ml={3} /></BigCaret>
            <Column $w={90} $pl={9}>
              <Command icon={<PanHand />} label="Pan" w={19} />
              <Command icon={<ZoomAllIcon />} label="Zoom All" w={46} caret={7} />
              <Command icon={<OrbitIcon />} label="Orbit" w={25} caret={7} />
            </Column>
            <Column $w={92} $pl={9}>
              <Command icon={<LookAt />} label="Look At" w={39} />
              <Command icon={<PreviousIcon />} label="Previous" w={42} caret={7} />
              <Command icon={<Home />} label="Home View" w={57} />
            </Column>
          </GroupBody>
          <GroupTitle $shift={7}><Text w={45}>Navigate</Text></GroupTitle>
        </Group>
      </Ribbon>

      <Canvas>
        <CanvasHead>
          <AddTab><S w={9} h={9}><path d="M4.500 0v9M0 4.500h9" stroke="#9aa5b1" strokeWidth="1.500" /></S></AddTab>
          <WindowTools><MinIcon /><MdiTile /><CloseIcon s={10} c="#444" t={1.7} /></WindowTools>
        </CanvasHead>
        <Placed $x={448} $y={73}><Model /></Placed>
        <Placed $x={1200} $y={35}><ViewCube /></Placed>
        <Placed $x={17} $y={415}><Axes /></Placed>
      </Canvas>

      <DocTabs>
        <DocTab><Text w={77}>Ensamblaje.iam</Text><CloseIcon s={9} c="#777" t={1.7} /></DocTab>
        <Menu />
      </DocTabs>
      <StatusBar>
        <Text w={30}>Ready</Text>
        <StatusCell $first $w={37}><Text w={12}>66</Text></StatusCell>
        <EndCell $w={36}><Text w={12}>40</Text></EndCell>
      </StatusBar>
      <Watermark>
        <WatermarkLine><Text w={138} size={19}>Activar Windows</Text></WatermarkLine>
        <WatermarkLine><Text w={258} size={13.5}>Ve a Configuración para activar Windows.</Text></WatermarkLine>
      </Watermark>
    </Window>
  );
}
